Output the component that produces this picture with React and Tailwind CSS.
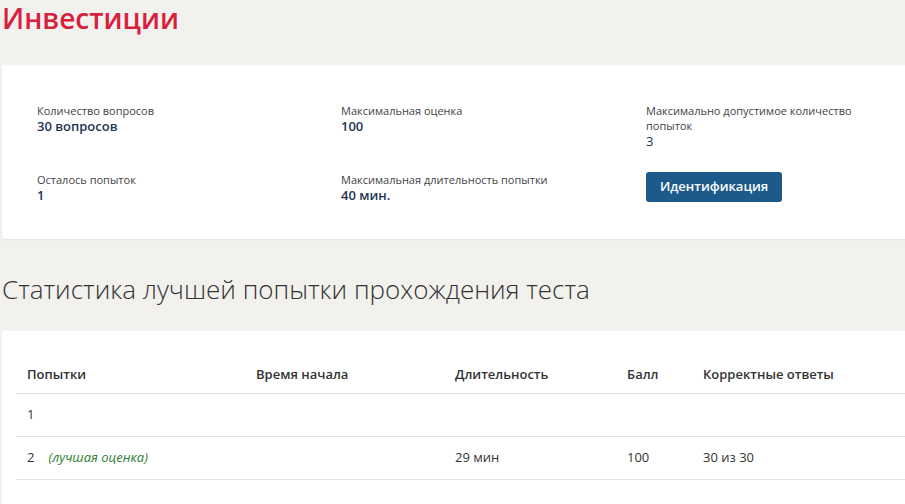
import React from 'react';

const info = [
  { label: 'Количество вопросов', value: '30 вопросов', bold: true },
  { label: 'Максимальная оценка', value: '100', bold: true },
  { label: 'Максимально допустимое количество попыток', value: '3', bold: false },
  { label: 'Осталось попыток', value: '1', bold: true },
  { label: 'Максимальная длительность попытки', value: '40 мин.', bold: true },
];

const attempts = [
  { n: '1', best: false, start: '', duration: '', score: '', correct: '' },
  { n: '2', best: true, start: '', duration: '29 мин', score: '100', correct: '30 из 30' },
];

const InfoItem = ({ label, value, bold }) => (
  <div>
    <div className="max-w-[225px] text-[11px] leading-[15px] text-[#444]">{label}</div>
    <div
      className={
        'text-[13px] leading-[16px] text-[#1c3553] ' + (bold ? 'font-semibold' : '')
      }
    >
      {value}
    </div>
  </div>
);

const App = () => {
  return (
    <div
      className="w-[905px] h-[504px] overflow-hidden bg-[#f2f1ee]"
      style={{ fontFamily: '"Open Sans", "Liberation Sans", sans-serif' }}
    >
      <div className="w-[960px] pl-[2px]">
        <h1 className="text-[28px] leading-[36px] font-semibold text-[#d71f3e]">
          Инвестиции
        </h1>

        <div className="mt-[29px] bg-white rounded-[2px] shadow-[0_1px_2px_rgba(0,0,0,0.06)] pl-[35px] pt-[38px] pb-[36px]">
          <div className="grid grid-cols-[304px_305px_305px] gap-y-[23px]">
            {info.map((item) => (
              <InfoItem key={item.label} {...item} />
            ))}
            <div>
              <button className="h-[30px] px-[14px] bg-[#1c5a8c] text-white text-[13px] font-semibold rounded-[3px]">
                Идентификация
              </button>
            </div>
          </div>
        </div>

        <h2 className="mt-[32px] text-[26px] leading-[36px] font-light text-[#333]">
          Статистика лучшей попытки прохождения теста
        </h2>

        <div className="mt-[24px] bg-white rounded-[2px] pl-[14px] pt-[26px] h-[200px]">
          <table className="w-[946px] border-collapse text-[13px] text-[#333]">
            <thead>
              <tr className="border-b border-[#e3e3e3]">
                <th className="w-[240px] h-[36px] pl-[11px] text-left font-semibold align-middle">Попытки</th>
                <th className="w-[199px] text-left font-semibold">Время начала</th>
                <th className="w-[172px] text-left font-semibold">Длительность</th>
                <th className="w-[76px] text-left font-semibold">Балл</th>
                <th className="text-left font-semibold">Корректные ответы</th>
              </tr>
            </thead>
            <tbody>
              {attempts.map((a) => (
                <tr key={a.n} className="border-b border-[#e3e3e3]">
                  <td className="h-[43px] pl-[11px]">
                    {a.n}
                    {a.best && (
                      <span className="ml-[14px] italic text-[13px] text-[#2e7d32]">(лучшая оценка)</span>
                    )}
                  </td>
                  <td>{a.start}</td>
                  <td>{a.duration}</td>
                  <td>{a.score}</td>
                  <td>{a.correct}</td>
                </tr>
              ))}
            </tbody>
          </table>
        </div>
      </div>
    </div>
  );
};

export default App;
